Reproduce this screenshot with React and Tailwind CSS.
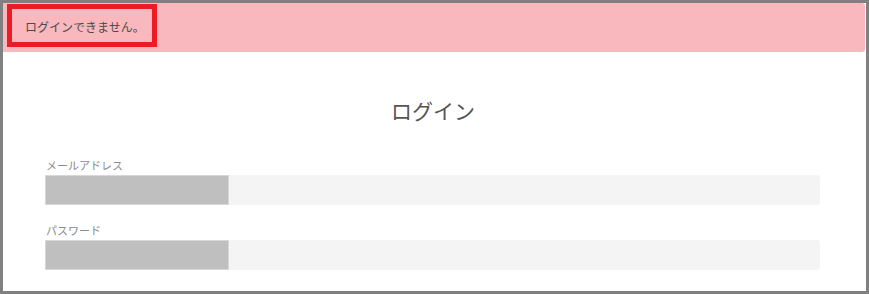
import React from "react";

function Field({ label }) {
  return (
    <div>
      <div className="text-[11px] leading-[16px] text-[#8a8a8a] pl-px">{label}</div>
      <div className="mt-[2px] flex h-[30px] w-[775px] rounded-r-[3px] bg-[#f4f4f4]">
        <div className="h-full w-[184px] border border-[#d8d8d8] bg-[#bfbfbf]" />
      </div>
    </div>
  );
}

export default function App() {
  return (
    <div
      className="w-[869px] h-[294px] border-[3px] border-[#808080] bg-white overflow-hidden"
      style={{ fontFamily: '"Noto Sans CJK JP", "Noto Sans", sans-serif' }}
    >
      <div className="mr-px h-[49px] rounded-r-[3px] bg-[#f8b8bd] pl-[4px] pt-[1px]">
        <div className="flex h-[43px] w-[150px] items-center border-[5px] border-[#ed1c24] pl-[13px] pt-[3px] text-[12px] text-[#4a4a4a]">
          ログインできません。
        </div>
      </div>
      <h1 className="mt-[43px] pr-[3px] text-center text-[21px] leading-[30px] text-[#555555]">
        ログイン
      </h1>
      <div className="ml-[42px] mt-[32px] flex flex-col gap-[17px]">
        <Field label="メールアドレス" />
        <Field label="パスワード" />
      </div>
    </div>
  );
}
